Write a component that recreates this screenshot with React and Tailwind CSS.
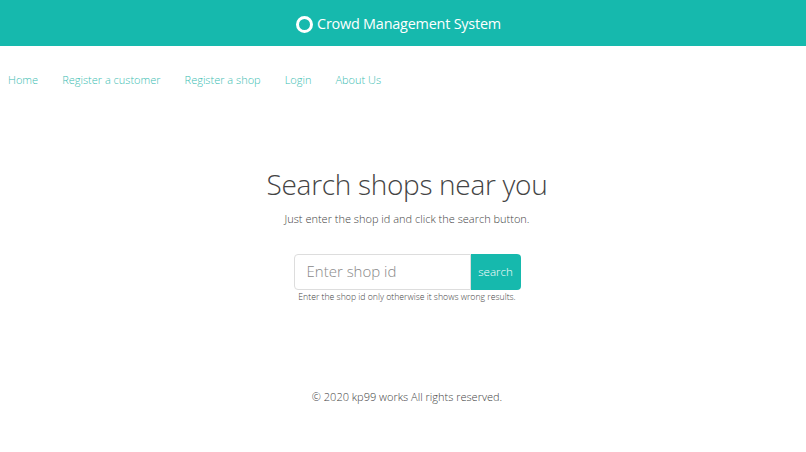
export default function App() {
  const font = { fontFamily: '"Open Sans", "Noto Sans", sans-serif' };
  return (
    <div className="w-[806px] h-[452px] bg-white font-light" style={font}>
      <header className="h-[46px] pt-[2px] pr-[9px] bg-[#16b9ad] flex items-center justify-center gap-[4px] text-white">
        <span className="w-[17px] h-[17px] rounded-full border-[3px] border-white"></span>
        <span className="text-[14.4px] font-normal tracking-[-0.2px]">Crowd Management System</span>
      </header>
      <nav className="flex items-center h-[67px] pt-[2px] pl-[8px] gap-[24px] text-[11px] text-[#3bbdb2]">
        <a>Home</a>
        <a>Register a customer</a>
        <a>Register a shop</a>
        <a>Login</a>
        <a>About Us</a>
      </nav>
      <main className="flex flex-col items-center pl-[8px]">
        <h1 className="mt-[53px] text-[28px] leading-[36px] text-[#444] tracking-[-0.3px]">Search shops near you</h1>
        <p className="mt-[9px] text-[11px] text-[#444]">Just enter the shop id and click the search button.</p>
        <div className="mt-[26px] flex h-[36px]">
          <div className="w-[177px] border border-[#ddd] rounded-l-[4px] flex items-center pl-[12px] text-[15px] text-[#888]">Enter shop id</div>
          <button className="w-[50px] bg-[#16b9ad] rounded-r-[4px] text-white text-[11.5px]">search</button>
        </div>
        <p className="mt-[1px] text-[8.7px] text-[#444]">Enter the shop id only otherwise it shows wrong results.</p>
        <p className="mt-[85px] text-[11px] text-[#444]">© 2020 kp99 works All rights reserved.</p>
      </main>
    </div>
  );
}
